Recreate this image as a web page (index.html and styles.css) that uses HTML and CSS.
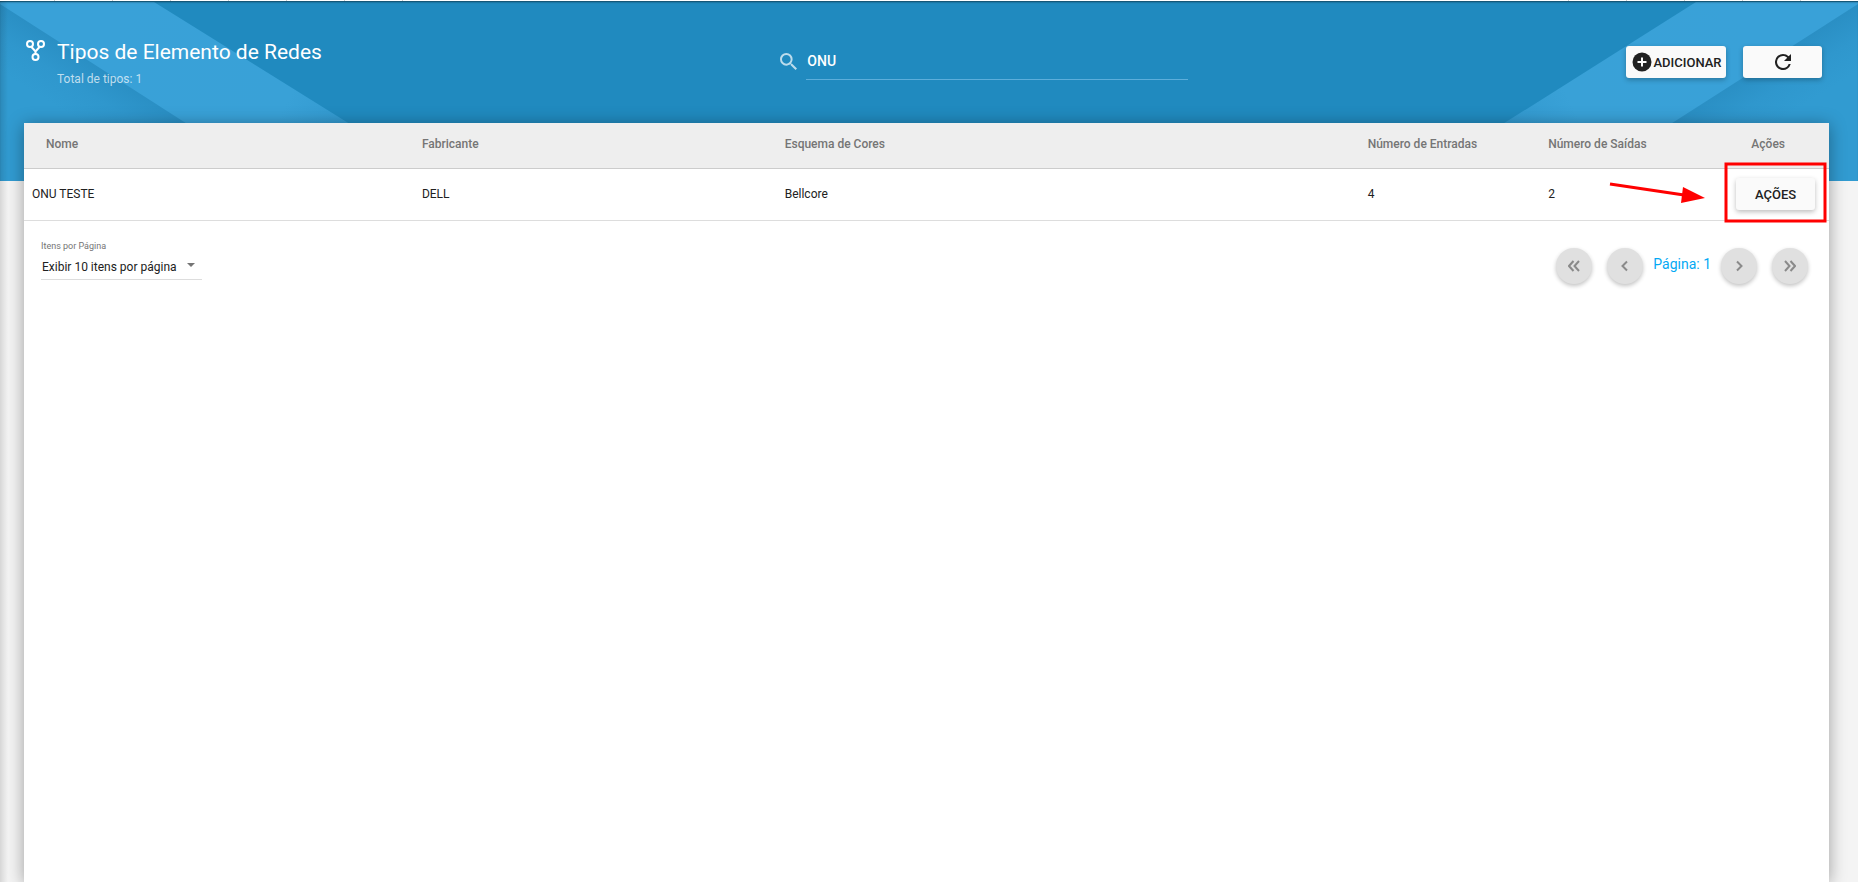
FILE: index.html
```html
<!DOCTYPE html>
<html lang="pt-BR">
<head>
<meta charset="utf-8">
<title>Tipos de Elemento de Redes</title>
<link rel="stylesheet" href="styles.css">
</head>
<body>
<div class="page">
  <div class="tab-edge" aria-hidden="true"></div>
  <div class="banner" aria-hidden="true">
    <svg class="stripes stripes-left" viewBox="0 0 450 180">
      <defs>
        <linearGradient id="band" gradientUnits="userSpaceOnUse" x1="120" y1="0" x2="350" y2="120">
          <stop offset="0" stop-color="#39a1d8"/><stop offset="0.75" stop-color="#39a1d7"/><stop offset="1" stop-color="#3299cf"/>
        </linearGradient>
        <linearGradient id="fold" gradientUnits="userSpaceOnUse" x1="92" y1="60" x2="62" y2="108">
          <stop offset="0" stop-color="#2a8fc4"/><stop offset="0.5" stop-color="#2f97cd"/><stop offset="1" stop-color="#319bd1"/>
        </linearGradient>
      </defs>
      <path d="M0 0H154L443 180H0Z" fill="url(#band)"/>
      <path d="M0 2L278 180H0Z" fill="url(#fold)"/>
    </svg>
    <svg class="stripes stripes-right" viewBox="0 0 450 180">
      <path d="M0 0H162L447 180H0Z" fill="url(#band)"/>
      <path d="M0 2L278 180H0Z" fill="url(#fold)"/>
    </svg>
  </div>

  <header class="header">
    <div class="heading">
      <svg class="heading-icon" viewBox="0 0 20 22" fill="none" stroke="#fff" stroke-width="2">
        <circle cx="4" cy="4" r="3"/><circle cx="15" cy="4" r="3"/><circle cx="9.500" cy="17" r="3"/>
        <path d="M5.500 7L9.500 11.500L13.500 7M9.500 11.500V14"/>
      </svg>
      <div>
        <h1 class="title">Tipos de Elemento de Redes</h1>
        <p class="subtitle">Total de tipos: 1</p>
      </div>
    </div>
    <form class="search">
      <label for="search" class="search-label" aria-label="Pesquisar">
        <svg class="search-icon" viewBox="3 3 17.500 17.500"><path d="M15.500 14h-.79l-.28-.27A6.471 6.471 0 0 0 16 9.500 6.500 6.500 0 1 0 9.500 16c1.610 0 3.090-.59 4.230-1.570l.27.28v.79l5 4.990L20.490 19l-4.990-5zm-6 0C7.010 14 5 11.990 5 9.500S7.010 5 9.500 5 14 7.010 14 9.500 11.990 14 9.500 14z"/></svg>
      </label>
      <input id="search" class="search-input" type="text" value="ONU">
    </form>
    <div class="toolbar">
      <button class="btn btn-add" type="button">
        <svg class="add-icon" viewBox="0 0 20 20"><circle cx="10" cy="10" r="9.500" fill="#212121"/><path d="M10 5.500V14.500M5.500 10H14.500" stroke="#fafafa" stroke-width="2"/></svg>
        <span>ADICIONAR</span>
      </button>
      <button class="btn btn-wide" type="button" aria-label="Atualizar">
        <svg class="refresh-icon" viewBox="4 4 16 16"><path d="M17.650 6.350A7.958 7.958 0 0 0 12 4a8 8 0 1 0 7.730 10h-2.080A5.990 5.990 0 0 1 12 18a6 6 0 1 1 0-12c1.660 0 3.140.69 4.220 1.780L13 11h7V4l-2.350 2.350z"/></svg>
      </button>
    </div>
  </header>

  <main class="card">
    <table class="grid">
      <colgroup><col class="c-name"><col class="c-maker"><col class="c-scheme"><col class="c-in"><col class="c-out"><col class="c-act"></colgroup>
      <thead>
        <tr><th class="first">Nome</th><th>Fabricante</th><th>Esquema de Cores</th><th>Número de Entradas</th><th>Número de Saídas</th><th class="actions">Ações</th></tr>
      </thead>
      <tbody>
        <tr>
          <td>ONU TESTE</td><td>DELL</td><td>Bellcore</td><td>4</td><td>2</td>
          <td class="actions">
            <button class="btn btn-wide" type="button">AÇÕES</button>
            <svg class="callout" viewBox="0 0 220 63" aria-hidden="true">
              <rect x="118" y="3" width="99" height="57" fill="none" stroke="#f00" stroke-width="3"/>
              <path d="M2 23L76 34" stroke="#f00" stroke-width="3"/>
              <path d="M75 26L97 37L73 42Z" fill="#f00"/>
            </svg>
          </td>
        </tr>
      </tbody>
    </table>

    <footer class="footer">
      <div class="page-size">
        <label class="page-size-label" for="page-size">Itens por Página</label>
        <div class="select-box">
          <select id="page-size" class="select"><option>Exibir 10 itens por página</option></select>
          <svg class="caret" viewBox="0 0 8 4"><path d="M0 0H8L4 4Z"/></svg>
        </div>
      </div>
      <nav class="pager" aria-label="Paginação">
        <button class="round" type="button" aria-label="Primeira página"><svg viewBox="0 0 12 12"><path d="M5.500 1L1 6L5.500 11M11 1L6.500 6L11 11"/></svg></button>
        <button class="round" type="button" aria-label="Página anterior"><svg viewBox="0 0 12 12"><path d="M8 1.500L3.500 6L8 10.500"/></svg></button>
        <span class="current">Página: 1</span>
        <button class="round" type="button" aria-label="Próxima página"><svg viewBox="0 0 12 12"><path d="M4 1.500L8.500 6L4 10.500"/></svg></button>
        <button class="round" type="button" aria-label="Última página"><svg viewBox="0 0 12 12"><path d="M1 1L5.500 6L1 11M6.500 1L11 6L6.500 11"/></svg></button>
      </nav>
    </footer>
  </main>
</div>
</body>
</html>
```
FILE: styles.css
```css
* { box-sizing: border-box; }
body {
  margin: 0;
  font-family: Roboto, "Liberation Sans", sans-serif;
  font-size: 12px;
  color: #212121;
  background: #f4f4f4;
}
button, input, select { font: inherit; color: inherit; }

.page {
  position: relative;
  display: flex;
  flex-direction: column;
  min-height: 100vh;
  overflow: hidden;
}
.page::after {
  content: "";
  position: absolute;
  inset: 1px auto 0 0;
  width: 8px;
  background: linear-gradient(to right, rgba(0, 0, 0, 0.12), transparent);
}
.tab-edge {
  height: 1px;
  background:
    repeating-linear-gradient(to right, transparent 0 54px, #ccc 54px 55px, transparent 55px 58px) left / 406px 1px no-repeat,
    repeating-linear-gradient(to left, transparent 0 57px, #ccc 57px 58px) right / 292px 1px no-repeat,
    #fff;
}
.banner {
  position: absolute;
  inset: 1px 0 auto 0;
  height: 180px;
  background: #208abf;
  overflow: hidden;
}
.banner::after {
  content: "";
  position: absolute;
  inset: 0;
  box-shadow: inset 0 2px 2px -1px rgba(0, 0, 0, 0.5);
}
.stripes { position: absolute; top: 1px; height: 180px; width: 450px; }
.stripes-left { left: 0; }
.stripes-right { right: 0; transform: scaleX(-1); }

.header {
  position: relative;
  display: grid;
  grid-template-columns: 42% 22.7% 1fr;
  align-items: start;
  height: 122px;
  padding: 36px 36px 0 26px;
}
.heading { display: flex; gap: 11px; }
.heading-icon { width: 20px; height: 22px; margin-top: 3px; }
.title { margin: 1px 0 0; font-size: 21px; line-height: 28px; font-weight: 400; color: #fff; }
.subtitle { margin: 5px 0 0; line-height: 16px; color: rgba(255, 255, 255, 0.7); }

.search { display: flex; gap: 9px; padding-top: 6px; }
.search-label { display: flex; align-items: center; height: 36px; }
.search-icon { width: 17px; height: 17px; fill: rgba(255, 255, 255, 0.7); }
.search-input {
  flex: 1;
  min-width: 0;
  height: 37px;
  padding: 0 0 0 1px;
  border: 0;
  border-bottom: 1px solid #5caedb;
  background: none;
  color: #fff;
  font-size: 14px;
  font-weight: 500;
  outline: 0;
}

.toolbar { display: flex; justify-content: flex-end; gap: 17px; padding-top: 9px; }
.btn {
  display: inline-flex;
  align-items: center;
  justify-content: center;
  height: 32px;
  padding: 0;
  border: 0;
  border-radius: 3px;
  background: #fafafa;
  box-shadow: 0 2px 5px rgba(0, 0, 0, 0.26);
  font-size: 13px;
  font-weight: 500;
}
.btn-add { width: 100px; gap: 1px; padding-left: 2px; }
.btn-wide { width: 79px; }
.add-icon { width: 20px; height: 20px; }
.refresh-icon { width: 16px; height: 16px; fill: #212121; }

.card {
  position: relative;
  flex: 1;
  margin: 0 29px 0 24px;
  background: #fff;
  box-shadow: 0 2px 16px rgba(0, 0, 0, 0.36);
}
.grid { width: 100%; table-layout: fixed; border-collapse: collapse; }
.c-name { width: 21.6%; }
.c-maker { width: 20.1%; }
.c-scheme { width: 32.3%; }
.c-in { width: 10%; }
.c-out { width: 10%; }
.c-act { width: 6%; }
.grid th {
  height: 45px;
  padding: 0 8px 2px;
  border-bottom: 1px solid #ccc;
  background: #eee;
  color: #757575;
  font-weight: 500;
  text-align: left;
}
.grid th.first { padding-left: 22px; }
.grid td { height: 52px; padding: 0 8px; border-bottom: 1px solid #ddd; }
.grid .actions { position: relative; padding-right: 14px; text-align: right; }
.grid th.actions { padding-right: 44px; }
.callout {
  position: absolute;
  top: -8px;
  right: 1px;
  width: 220px;
  height: 63px;
  pointer-events: none;
}

.footer { display: flex; justify-content: space-between; padding: 19px 21px 0 17px; }
.page-size { width: 161px; }
.page-size-label { display: block; font-size: 9px; line-height: 12px; color: #757575; }
.select-box { display: flex; align-items: center; height: 28px; border-bottom: 1px solid #ddd; }
.select {
  flex: 1;
  appearance: none;
  padding: 3px 0 0 1px;
  border: 0;
  background: none;
  outline: 0;
}
.caret { width: 8px; height: 4px; margin-right: 7px; fill: #757575; }
.pager { display: flex; gap: 15px; padding-top: 8px; }
.round {
  display: flex;
  align-items: center;
  justify-content: center;
  width: 36px;
  height: 36px;
  padding: 0;
  border: 0;
  border-radius: 50%;
  background: #e0e0e0;
  box-shadow: 0 2px 4px rgba(0, 0, 0, 0.24);
}
.round svg { width: 12px; height: 12px; fill: none; stroke: #8a8a8a; stroke-width: 2; }
.current { margin: 0 -5px; font-size: 14px; line-height: 32px; color: #03a9f4; }
```
